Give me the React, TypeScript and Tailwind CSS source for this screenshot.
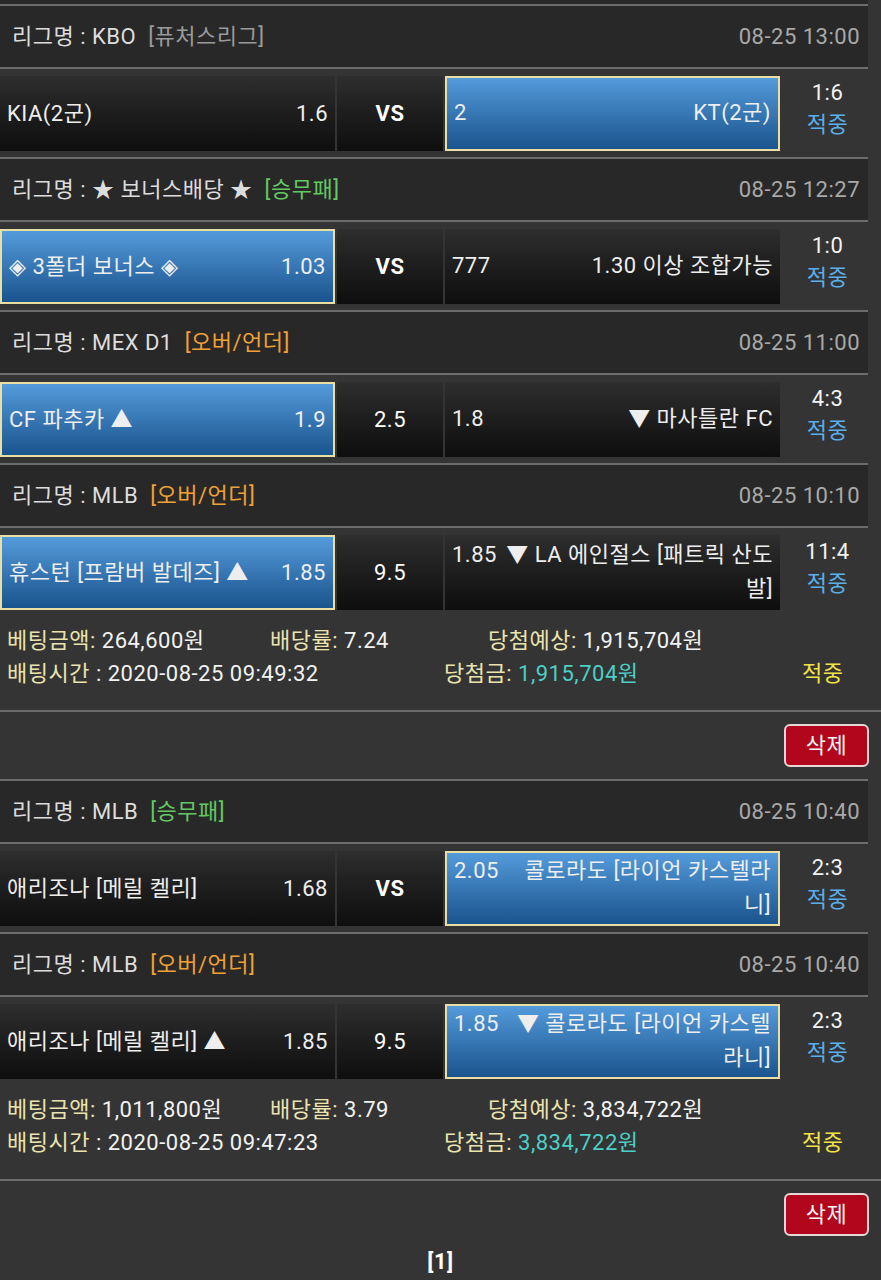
import React from "react";

type Side = { name: string[]; odds: string; sel?: boolean };

interface Game {
  league: string;
  tag: string;
  tagColor: "gray" | "green" | "orange";
  time: string;
  home: Side;
  mid: string;
  away: Side;
  score: string;
}

interface Bet {
  games: Game[];
  amount: string;
  rate: string;
  expect: string;
  time: string;
  win: string;
}

const TAG_COLOR: Record<string, string> = {
  gray: "text-[#9a9a9a]",
  green: "text-[#62c962]",
  orange: "text-[#f0a035]",
};

const BETS: Bet[] = [
  {
    games: [
      {
        league: "KBO",
        tag: "[퓨처스리그]",
        tagColor: "gray",
        time: "08-25 13:00",
        home: { name: ["KIA(2군)"], odds: "1.6" },
        mid: "VS",
        away: { name: ["KT(2군)"], odds: "2", sel: true },
        score: "1:6",
      },
      {
        league: "★ 보너스배당 ★",
        tag: "[승무패]",
        tagColor: "green",
        time: "08-25 12:27",
        home: { name: ["◈ 3폴더 보너스 ◈"], odds: "1.03", sel: true },
        mid: "VS",
        away: { name: ["1.30 이상 조합가능"], odds: "777" },
        score: "1:0",
      },
      {
        league: "MEX D1",
        tag: "[오버/언더]",
        tagColor: "orange",
        time: "08-25 11:00",
        home: { name: ["CF 파추카 ▲"], odds: "1.9", sel: true },
        mid: "2.5",
        away: { name: ["▼ 마사틀란 FC"], odds: "1.8" },
        score: "4:3",
      },
      {
        league: "MLB",
        tag: "[오버/언더]",
        tagColor: "orange",
        time: "08-25 10:10",
        home: { name: ["휴스턴 [프람버 발데즈] ▲"], odds: "1.85", sel: true },
        mid: "9.5",
        away: { name: ["▼ LA 에인절스 [패트릭 산도", "발]"], odds: "1.85" },
        score: "11:4",
      },
    ],
    amount: "264,600원",
    rate: "7.24",
    expect: "1,915,704원",
    time: "2020-08-25 09:49:32",
    win: "1,915,704원",
  },
  {
    games: [
      {
        league: "MLB",
        tag: "[승무패]",
        tagColor: "green",
        time: "08-25 10:40",
        home: { name: ["애리조나 [메릴 켈리]"], odds: "1.68" },
        mid: "VS",
        away: { name: ["콜로라도 [라이언 카스텔라", "니]"], odds: "2.05", sel: true },
        score: "2:3",
      },
      {
        league: "MLB",
        tag: "[오버/언더]",
        tagColor: "orange",
        time: "08-25 10:40",
        home: { name: ["애리조나 [메릴 켈리] ▲"], odds: "1.85" },
        mid: "9.5",
        away: { name: ["▼ 콜로라도 [라이언 카스텔", "라니]"], odds: "1.85", sel: true },
        score: "2:3",
      },
    ],
    amount: "1,011,800원",
    rate: "3.79",
    expect: "3,834,722원",
    time: "2020-08-25 09:47:23",
    win: "3,834,722원",
  },
];

const DARK = "bg-linear-to-b from-[#2e2e2e] to-[#0e0e0e]";
const BLUE = "bg-linear-to-b from-[#549bdb] to-[#1a548e] border-2 border-[#eadfa3]";

function LeagueRow({ g }: { g: Game }) {
  return (
    <div className="w-[868px] h-[65px] bg-[#282828] border-y-2 border-[#6c6c6c] flex items-center justify-between pl-[12px] pr-[8px]">
      <div className="text-[#dddddd]">
        리그명 : {g.league}
        <span className={`ml-3 ${TAG_COLOR[g.tagColor]}`}>{g.tag}</span>
      </div>
      <div className="text-[#a9a9a9]">{g.time}</div>
    </div>
  );
}

function GameRow({ g }: { g: Game }) {
  return (
    <div className="w-[868px] h-[88px] flex items-center gap-[2px]">
      {/* home */}
      <div
        className={`w-[335px] h-[75px] flex items-center justify-between px-[7px] text-[#eeeeee] whitespace-nowrap ${
          g.home.sel ? BLUE : DARK
        }`}
      >
        <span>{g.home.name[0]}</span>
        <span>{g.home.odds}</span>
      </div>
      {/* middle */}
      <div className={`w-[106px] h-[75px] flex items-center justify-center text-white ${DARK}`}>
        <span className={g.mid === "VS" ? "font-bold" : ""}>{g.mid}</span>
      </div>
      {/* away */}
      <div
        className={`w-[335px] h-[75px] flex items-center px-[7px] text-[#eeeeee] ${g.away.sel ? BLUE : DARK}`}
      >
        <div className="w-full flow-root text-right leading-[34px]">
          <span className="float-left">{g.away.odds}</span>
          {g.away.name.map((l, i) => (
            <div key={i} className="whitespace-nowrap">
              {l}
            </div>
          ))}
        </div>
      </div>
      {/* result */}
      <div className="w-[86px] pl-[5px] flex flex-col items-center leading-[32px] mb-[8px]">
        <span className="text-[#f2f2f2]">{g.score}</span>
        <span className="text-[#5aaee9]">적중</span>
      </div>
    </div>
  );
}

function BetInfo({ b }: { b: Bet }) {
  return (
    <div className="pt-[8px] pb-[20px] leading-[33px]">
      <div className="flex">
        <div className="w-[270px] pl-[7px]">
          <span className="text-[#ebe3ae]">베팅금액:</span> <span className="text-[#f2f2f2]">{b.amount}</span>
        </div>
        <div className="w-[218px]">
          <span className="text-[#ebe3ae]">배당률:</span> <span className="text-[#f2f2f2]">{b.rate}</span>
        </div>
        <div>
          <span className="text-[#ebe3ae]">당첨예상:</span> <span className="text-[#f2f2f2]">{b.expect}</span>
        </div>
      </div>
      <div className="flex">
        <div className="w-[444px] pl-[7px]">
          <span className="text-[#ebe3ae]">배팅시간</span> <span className="text-[#f2f2f2]">: {b.time}</span>
        </div>
        <div className="w-[358px]">
          <span className="text-[#ebe3ae]">당첨금:</span> <span className="text-[#4ccfc6]">{b.win}</span>
        </div>
        <div className="text-[#f1e346]">적중</div>
      </div>
    </div>
  );
}

export default function App() {
  return (
    <div className="min-h-[1280px] bg-[#343434] text-[22px] tracking-[0.5px] font-[Roboto,'Noto_Sans_CJK_KR',sans-serif] overflow-hidden">
      <div className="w-[868px] h-[4px] bg-[#282828]" />
      {BETS.map((b, bi) => (
        <div key={bi}>
          {b.games.map((g, gi) => (
            <div key={gi}>
              <LeagueRow g={g} />
              <GameRow g={g} />
            </div>
          ))}
          <BetInfo b={b} />
          <div className="border-t-2 border-[#6c6c6c] h-[69px] flex items-center justify-end pr-[12px]">
            <button className="w-[85px] h-[43px] rounded-md border-2 border-[#e6d6d6] bg-[#b1061b] text-[#f6f6f6] leading-none">
              삭제
            </button>
          </div>
        </div>
      ))}
      <div className="text-center font-bold text-white leading-[28px]">[1]</div>
    </div>
  );
}
